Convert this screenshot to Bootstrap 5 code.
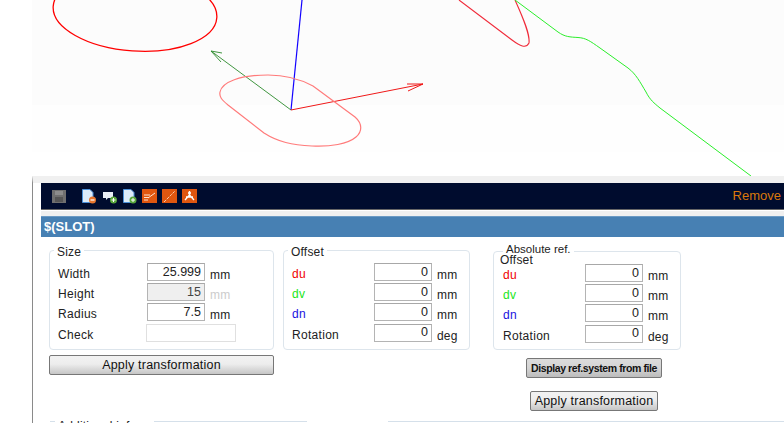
<!DOCTYPE html>
<html lang="en">
<head>
  <meta charset="UTF-8">
  <title>Slot</title>
  <link href="https://cdn.jsdelivr.net/npm/bootstrap@5.3.2/dist/css/bootstrap.min.css" rel="stylesheet">
  <style>
    html, body { height: 423px; overflow: hidden; background: #fff; }
    body { font-family: "Liberation Sans", Arial, sans-serif; font-size: 12.5px; color: #222; }
    .view-area { height: 176px; display: block; width: 784px; }
    .slot-panel { margin-left: 32px; width: 752px; height: 247px; background: #fff; border-left: 1px solid #8a8a8a; border-top: 7px solid #f0f0f0; overflow: hidden; }
    .tool-bar { margin-left: 8px; height: 27px; background: #000c2e; border-bottom: 1px solid #666; padding-left: 11px; }
    .tool-bar svg { display: block; }
    .tool-icons { gap: 5px; }
    .tool-first { margin-left: 10px; }
    .remove-link { color: #d9780a; font-size: 13px; white-space: nowrap; margin-right: 3px; }
    .slot-title { margin: 6px 0 0 8px; height: 21px; background: #4780b3; border-top: 1px solid #6b9ac4; box-shadow: 0 -5px 0 #f0f0f0; color: #fff; font-weight: 700; font-size: 13px; line-height: 20px; padding-left: 3px; }
    .forms-row { margin: 6px 0 0 16px; }
    .group-box { border: 1px solid #dde5ec; border-radius: 4px; margin: 0; padding: 0; }
    .group-box legend { all: unset; font-size: 12px; padding: 4px 3px 0; line-height: 10px; letter-spacing: .2px; }
    .size-box { width: 225px; height: 107px; padding: 6px 0 0 8px; }
    .size-box legend, .offset-box legend { margin-left: -4px; }
    .offset-box { width: 187px; height: 107px; padding: 6px 0 0 8px; }
    .abs-box { width: 188px; height: 104px; padding: 0 0 0 9px; }
    .abs-box legend { margin-left: 0; padding: 0 3px; font-size: 11.5px; letter-spacing: 0; position: relative; top: -2px; }
    .abs-col { margin-left: 23px; width: 188px; margin-top: 3px; }
    .mid-col { margin-left: 9px; }
    .left-col { width: 225px; }
    .sub-head { line-height: 10px; font-size: 12px; letter-spacing: .2px; margin: -1px 0 -1px -3px; }
    .field-row { height: 20.2px; }
    .field-name { width: 89px; font-size: 12px; letter-spacing: .3px; padding-top: 2px; }
    .offset-box .field-name, .abs-box .field-name { width: 82px; }
    .num-input { width: 58px; height: 18px; border: 1px solid #b4b4b4; border-top-color: #a8a8a8; border-radius: 0; padding: 0 3px; text-align: right; font-size: 12.5px; color: #222; background: #fff; font-family: inherit; }
    .num-input:disabled { background: #efefef; color: #444; }
    .check-input { width: 90px; height: 18px; border: 1px solid #e0e0e0; background: #fff; margin-left: -1px; }
    .unit-label { margin-left: 5px; font-size: 12px; letter-spacing: .2px; padding-top: 3px; }
    .unit-off { color: #ccc; }
    .du-label { color: #f00000; }
    .dv-label { color: #19e619; }
    .dn-label { color: #1a10e0; }
    .gray-btn { font-family: inherit; border: 1px solid #777; border-radius: 2px; background: linear-gradient(#f2f2f2, #ededed 45%, #c6c6c6); color: #111; font-size: 12.5px; letter-spacing: .2px; padding: 0; line-height: 1; white-space: nowrap; }
    .wide-btn { width: 225px; height: 20px; margin-top: 5px; display: block; }
    .file-btn { width: 136px; height: 20px; margin: 8px 0 0 33px; display: block; font-size: 10.5px; font-weight: 700; letter-spacing: -.4px; background: linear-gradient(#dcdcdc, #d4d4d4 50%, #bcbcbc); }
    .abs-apply { width: 128px; height: 20px; margin: 13px 0 0 37px; display: block; }
    .extra-row { margin: 8px 0 0 17px; height: 14px; font-size: 12px; line-height: 14px; letter-spacing: .2px; }
    .extra-line { height: 1px; background: #d5e0ea; margin-top: 2px; }
    .line-a { width: 5px; margin-right: 3px; }
    .line-b { width: 153px; margin-left: 18px; }
    .line-c { flex: 1; margin-left: 81px; }
  </style>
</head>
<body>
  <svg class="view-area" viewBox="0 0 784 176" fill="none">
    <rect x="32" y="0" width="752" height="105" fill="#fcfcfc"/>
    <rect x="32" y="105" width="752" height="47" fill="#fefefe"/>
    <ellipse cx="135" cy="12" rx="82" ry="39" transform="rotate(4 135 12)" stroke="#f00" stroke-width="1.3"/>
    <path d="M291 110 L302 0" stroke="#10f" stroke-width="1.2"/>
    <path d="M291 110 L211 51 M211 51 L222 53 M211 51 L221 62" stroke="#2a8a2a" stroke-width=".9"/>
    <path d="M291 110 L423 84 M423 84 L407 84 M423 84 L408 91" stroke="#f01818"/>
    <path d="M228 105 C222 100 219 97 220 92 C222 82 240 75 268 75 C285 75 300 79 313 86 L355 117 C363 124 362 132 356 137 C348 144 330 147 312 146 C292 145 278 142 264 133 Z" stroke="#ff7b7b" stroke-width="1.2"/>
    <path d="M459 0 L512 40 C520 46 526 49 529 43 C530 35 525 22 515 0" stroke="#f02b3a" stroke-width="1.1"/>
    <path d="M515 0 L558 32 C565 37 570 37 578 37.5 C586 38 590 41 600 48 L628 68 C636 74 640 82 646 92 C650 100 654 103 660 108 L751 176" stroke="#2bee2b"/>
  </svg>
  <div class="slot-panel">
    <div class="tool-bar d-flex align-items-center justify-content-between">
      <div class="d-flex align-items-center tool-icons">
        <svg width="14" height="13" viewBox="0 0 14 13"><rect width="14" height="13" fill="#6f6f6f"/><rect x="3" y="1" width="8" height="4" fill="#8c8c8c"/><rect x="3" y="7" width="8" height="5" fill="#555"/></svg>
        <svg class="tool-first" width="16" height="15" viewBox="0 0 16 15"><path d="M1.5 .5H9L12 3.5V13.5H1.5Z" fill="#dcebf9" stroke="#4a90d9"/><circle cx="11.5" cy="11" r="3.5" fill="#e8772e"/><rect x="9.5" y="10.4" width="4" height="1.2" fill="#fff"/></svg>
        <svg width="15" height="15" viewBox="0 0 15 15"><path d="M1 3H11V9H6L4 11V9H1Z" fill="#e8eef5"/><circle cx="11.5" cy="11" r="3.5" fill="#5aa83c"/><path d="M9.5 11H13.5M11.5 9V13" stroke="#fff"/></svg>
        <svg width="15" height="15" viewBox="0 0 15 15"><path d="M1.5 .5H9L12 3.5V13.5H1.5Z" fill="#dcebf9" stroke="#4a90d9"/><circle cx="11" cy="11" r="3.5" fill="#5aa83c"/><path d="M9 11H13M11 9V13" stroke="#fff"/></svg>
        <svg width="15" height="14" viewBox="0 0 15 14"><rect width="15" height="14" fill="#e0560f"/><path d="M2 6H8M2 8.5H7M2 11H6M6 9L13 4" stroke="#fde3cf"/></svg>
        <svg width="15" height="14" viewBox="0 0 15 14"><rect width="15" height="14" fill="#e0560f"/><path d="M2 13L13 2" stroke="#fbc9a8" stroke-dasharray="3 1"/></svg>
        <svg width="15" height="14" viewBox="0 0 15 14"><rect width="15" height="14" fill="#e0560f"/><path d="M7.5 6V2M7.5 6L3 11M7.5 6L12 11M4 8H11" stroke="#fff" stroke-width="1.3"/><circle cx="7.5" cy="4" r="1.5" fill="#fff"/></svg>
      </div>
      <span class="remove-link">Remove</span>
    </div>
    <div class="slot-title">$(SLOT)</div>
    <div class="forms-row d-flex align-items-start">
      <div class="left-col">
        <fieldset class="group-box size-box">
          <legend>Size</legend>
          <div class="field-row d-flex"><span class="field-name">Width</span><input class="num-input" value="25.999"><span class="unit-label">mm</span></div>
          <div class="field-row d-flex"><span class="field-name">Height</span><input class="num-input" value="15" disabled><span class="unit-label unit-off">mm</span></div>
          <div class="field-row d-flex"><span class="field-name">Radius</span><input class="num-input" value="7.5"><span class="unit-label">mm</span></div>
          <div class="field-row d-flex"><span class="field-name">Check</span><input class="check-input"></div>
        </fieldset>
        <button class="gray-btn wide-btn">Apply transformation</button>
      </div>
      <div class="mid-col">
        <fieldset class="group-box offset-box">
          <legend>Offset</legend>
          <div class="field-row d-flex"><span class="field-name du-label">du</span><input class="num-input" value="0"><span class="unit-label">mm</span></div>
          <div class="field-row d-flex"><span class="field-name dv-label">dv</span><input class="num-input" value="0"><span class="unit-label">mm</span></div>
          <div class="field-row d-flex"><span class="field-name dn-label">dn</span><input class="num-input" value="0"><span class="unit-label">mm</span></div>
          <div class="field-row d-flex"><span class="field-name">Rotation</span><input class="num-input" value="0"><span class="unit-label">deg</span></div>
        </fieldset>
      </div>
      <div class="abs-col">
        <fieldset class="group-box abs-box">
          <legend>Absolute ref.</legend>
          <div class="sub-head">Offset</div>
          <div class="field-row d-flex"><span class="field-name du-label">du</span><input class="num-input" value="0"><span class="unit-label">mm</span></div>
          <div class="field-row d-flex"><span class="field-name dv-label">dv</span><input class="num-input" value="0"><span class="unit-label">mm</span></div>
          <div class="field-row d-flex"><span class="field-name dn-label">dn</span><input class="num-input" value="0"><span class="unit-label">mm</span></div>
          <div class="field-row d-flex"><span class="field-name">Rotation</span><input class="num-input" value="0"><span class="unit-label">deg</span></div>
        </fieldset>
        <button class="gray-btn file-btn">Display ref.system from file</button>
        <button class="gray-btn abs-apply">Apply transformation</button>
      </div>
    </div>
    <div class="extra-row d-flex">
      <span class="extra-line line-a"></span>
      <span>Additional info</span>
      <span class="extra-line line-b"></span>
      <span class="extra-line line-c"></span>
    </div>
  </div>
</body>
</html>
